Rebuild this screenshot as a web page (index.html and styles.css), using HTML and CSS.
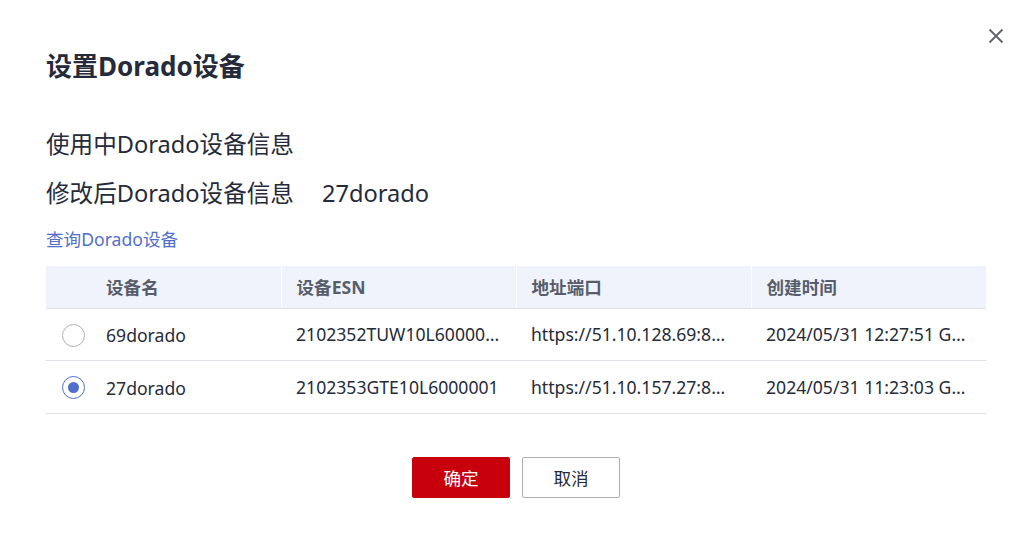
FILE: index.html
```html
<!DOCTYPE html>
<html lang="zh-CN">
<head>
<meta charset="utf-8">
<link rel="stylesheet" href="styles.css">
</head>
<body>
<div class="dialog">
  <button class="close" aria-label="close">
    <svg width="16" height="16" viewBox="0 0 16 16"><path d="M1.5 1.5 L14.5 14.5 M14.5 1.5 L1.5 14.5" stroke="#5e6270" stroke-width="1.8" fill="none"/></svg>
  </button>
  <h1 class="title">设置Dorado设备</h1>
  <div class="info">
    <div class="info-line">使用中Dorado设备信息</div>
    <div class="info-line"><span>修改后Dorado设备信息</span><span class="value">27dorado</span></div>
  </div>
  <a class="link">查询Dorado设备</a>
  <table class="table">
    <thead>
      <tr><th class="c1">设备名</th><th>设备ESN</th><th>地址端口</th><th>创建时间</th></tr>
    </thead>
    <tbody>
      <tr><td class="c1"><span class="radio"></span><span>69dorado</span></td><td><span class="ell">2102352TUW10L6000001</span></td><td><span class="ell">https://51.10.128.69:8088</span></td><td><span class="ell">2024/05/31 12:27:51 GMT+08:00</span></td></tr>
      <tr><td class="c1"><span class="radio checked"></span><span>27dorado</span></td><td><span class="ell">2102353GTE10L6000001</span></td><td><span class="ell">https://51.10.157.27:8088</span></td><td><span class="ell">2024/05/31 11:23:03 GMT+08:00</span></td></tr>
    </tbody>
  </table>
  <div class="footer">
    <button class="btn primary">确定</button>
    <button class="btn">取消</button>
  </div>
</div>
</body>
</html>
```
FILE: styles.css
```css
* { box-sizing: border-box; }
html, body { margin: 0; padding: 0; background: #fff; }
body {
  font-family: "Noto Sans", "Noto Sans CJK SC", sans-serif;
  color: #252b3a;
}
.dialog {
  position: relative;
  width: 1034px;
  height: 544px;
  padding: 48px 48px 0 46px;
}
.close {
  position: absolute;
  top: 28px;
  left: 988px;
  width: 16px;
  height: 16px;
  padding: 0;
  border: 0;
  background: none;
  display: flex;
}
.title {
  margin: 0;
  font-size: 26px;
  line-height: 36px;
  font-weight: 700;
  color: #252b3a;
}
.info {
  margin-top: 42px;
  display: flex;
  flex-direction: column;
  gap: 13px;
}
.info-line {
  font-size: 23.6px;
  line-height: 36px;
  display: flex;
}
.info-line .value { margin-left: 28px; }
.link {
  display: block;
  margin-top: 16px;
  font-size: 17.6px;
  line-height: 24px;
  color: #526ecc;
}
.table {
  margin-top: 15px;
  width: 940px;
  border-collapse: collapse;
  table-layout: fixed;
  font-size: 17.6px;
}
.table th {
  background: #f0f3fb;
  height: 42px;
  text-align: left;
  font-weight: 700;
  color: #575d6c;
  padding: 0 15px;
  border-left: 1px solid #fff;
  border-bottom: 1px solid #dfe1e6;
}
.table th.c1 { border-left: 0; padding-left: 60px; }
.table td {
  height: 52.5px;
  padding: 0 16px 0 15px;
  border-bottom: 1px solid #dfe1e6;
  white-space: nowrap;
  overflow: hidden;
}
.table td.c1 { padding-left: 16px; }
td.c1 > span { vertical-align: middle; }
.ell {
  display: block;
  overflow: hidden;
  text-overflow: ellipsis;
  white-space: nowrap;
}
.radio {
  display: inline-block;
  width: 23px;
  height: 23px;
  border-radius: 50%;
  border: 1px solid #adb0b8;
  margin-right: 21px;
  position: relative;
}
.radio.checked { border-color: #526ecc; }
.radio.checked::after {
  content: "";
  position: absolute;
  left: 5px;
  top: 5px;
  width: 11px;
  height: 11px;
  border-radius: 50%;
  background: #526ecc;
}
.footer {
  margin-top: 43px;
  display: flex;
  justify-content: center;
  gap: 12px;
}
.btn {
  width: 98px;
  height: 41px;
  border: 1px solid #adb0b8;
  border-radius: 2px;
  background: #fff;
  font-family: inherit;
  font-size: 17.6px;
  color: #252b3a;
}
.btn.primary {
  background: #c7000b;
  border-color: #c7000b;
  color: #fff;
}
```
